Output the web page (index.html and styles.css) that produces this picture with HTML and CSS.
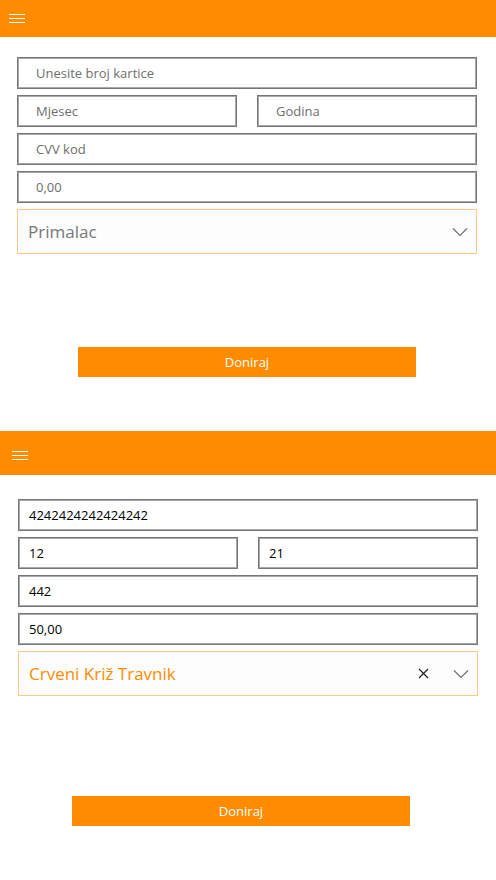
FILE: index.html
```html
<!DOCTYPE html>
<html lang="bs">
<head>
<meta charset="utf-8">
<title>Doniraj</title>
<link rel="stylesheet" href="styles.css">
</head>
<body>
<section class="screen screen-a">
  <header class="bar">
    <span class="burger"><i></i><i></i><i></i></span>
  </header>
  <div class="form">
    <div class="field"><span class="ph">Unesite broj kartice</span></div>
    <div class="row">
      <div class="field"><span class="ph">Mjesec</span></div>
      <div class="field"><span class="ph">Godina</span></div>
    </div>
    <div class="field"><span class="ph">CVV kod</span></div>
    <div class="field"><span class="ph">0,00</span></div>
    <div class="select">
      <span class="sel-ph">Primalac</span>
      <svg class="chev" width="16" height="10" viewBox="0 0 16 10"><path d="M1 1.5 L8 8.5 L15 1.5" fill="none" stroke="#6f6f6f" stroke-width="1.2"/></svg>
    </div>
  </div>
  <button class="btn">Doniraj</button>
</section>

<section class="screen screen-b">
  <header class="bar">
    <span class="burger"><i></i><i></i><i></i></span>
  </header>
  <div class="form">
    <div class="field"><span class="val">4242424242424242</span></div>
    <div class="row">
      <div class="field"><span class="val">12</span></div>
      <div class="field"><span class="val">21</span></div>
    </div>
    <div class="field"><span class="val">442</span></div>
    <div class="field"><span class="val">50,00</span></div>
    <div class="select">
      <span class="sel-val">Crveni Križ Travnik</span>
      <svg class="clear" width="11" height="11" viewBox="0 0 11 11"><path d="M1 1 L10 10 M10 1 L1 10" fill="none" stroke="#222" stroke-width="1.2"/></svg>
      <svg class="chev" width="16" height="10" viewBox="0 0 16 10"><path d="M1 1.5 L8 8.5 L15 1.5" fill="none" stroke="#6f6f6f" stroke-width="1.2"/></svg>
    </div>
  </div>
  <button class="btn">Doniraj</button>
</section>
</body>
</html>
```
FILE: styles.css
```css
* { box-sizing: border-box; }
html, body { margin: 0; padding: 0; background: #fff; }
body {
  width: 496px;
  font-family: "Open Sans", "Noto Sans", "Liberation Sans", sans-serif;
  font-size: 13px;
  color: #000;
}
.screen { display: flex; flex-direction: column; }
.screen-a { height: 431px; }
.screen-b { height: 449px; }

.bar {
  background: #ff8c00;
  display: flex;
  align-items: center;
}
.screen-a .bar { height: 37px; padding-left: 9px; }
.screen-b .bar { height: 44px; padding-left: 12px; padding-top: 4px; }
.burger { display: flex; flex-direction: column; gap: 3px; width: 16px; }
.burger i { display: block; height: 1px; background: #fff; }

.form {
  display: flex;
  flex-direction: column;
  gap: 6px;
  width: 460px;
}
.screen-a .form { margin: 20px 0 0 17px; }
.screen-b .form { margin: 24px 0 0 18px; }

.row { display: flex; gap: 20px; }
.row .field { flex: 1; }

.field {
  height: 32px;
  border: 1px solid #767676;
  box-shadow: inset 0 0 0 1px #a8a8a8;
  display: flex;
  align-items: center;
  background: #fff;
}
.ph { padding-left: 18px; color: #6e6e6e; }
.val { padding-left: 10px; color: #000; font-size: 13px; }

.select {
  height: 45px;
  border: 1px solid #fdc98b;
  background: #fdfdfd;
  display: flex;
  align-items: center;
  padding: 0 8px 0 10px;
  font-size: 17px;
}
.sel-ph { color: #777; flex: 1; }
.sel-val { color: #ff8c00; flex: 1; }
.clear { margin-right: 24px; }
.chev { display: block; }

.btn {
  height: 30px;
  width: 338px;
  border: 0;
  background: #ff8c00;
  color: #fff;
  font-family: inherit;
  font-size: 13px;
  padding: 0;
}
.screen-a .btn { margin: 93px 0 0 78px; }
.screen-b .btn { margin: 100px 0 0 72px; }
```
